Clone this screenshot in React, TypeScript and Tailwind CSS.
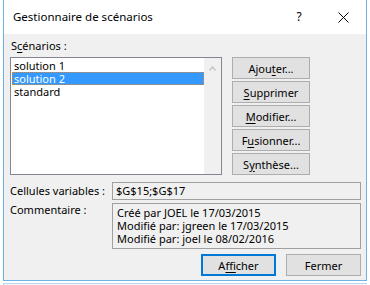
import React from 'react';

const font = { fontFamily: '"Segoe UI", "Noto Sans", sans-serif' };

function Key({ children }: { children: React.ReactNode }) {
  return <span className="underline underline-offset-2 decoration-1">{children}</span>;
}

function SideButton({ children }: { children: React.ReactNode }) {
  return (
    <button className="h-[22px] w-[78px] border border-[#adadad] bg-[#e1e1e1] text-[11px] leading-none text-black">
      {children}
    </button>
  );
}

export default function App() {
  const items = ['solution 1', 'solution 2', 'standard'];
  const selected = 1;

  return (
    <div className="w-[370px] h-[285px] bg-white text-[11px] text-black overflow-hidden" style={font}>
      <div className="ml-[3px] w-[364px] border-x border-b border-[#6cb4e8]">
        {/* title bar */}
        <div className="h-[34px] bg-white flex items-center pl-[9px]">
          <span className="flex-1 text-[11.5px]">Gestionnaire de scénarios</span>
          <span className="w-[10px] text-center text-[12px] mr-[34px]">?</span>
          <svg className="mr-[17px]" width="11" height="11" viewBox="0 0 11 11">
            <path d="M0.5 0.5 L10.5 10.5 M10.5 0.5 L0.5 10.5" stroke="#000" strokeWidth="1" />
          </svg>
        </div>

        {/* body */}
        <div className="h-[246px] bg-[#f0f0f0] flex flex-col">
          <div className="pl-[7px] pt-[4px] h-[23px] leading-[16px]">
            S<Key>c</Key>énarios :
          </div>

          <div className="flex pl-[6px]">
            <div className="w-[212px] h-[118px] border border-[#828790] bg-white flex">
              <div className="flex-1 pt-[1px] pl-[1px]">
                {items.map((it, i) => (
                  <div
                    key={it}
                    className={`h-[13px] leading-[13px] pl-[2px] ${
                      i === selected
                        ? 'bg-[#3399ff] text-white outline-1 outline-dotted outline-[#e08a2c] -outline-offset-1'
                        : ''
                    }`}
                  >
                    {it}
                  </div>
                ))}
              </div>
              <div className="w-[17px] bg-[#f0f0f0] flex justify-center pt-[8px]">
                <svg width="7" height="5" viewBox="0 0 7 5">
                  <path d="M0.5 4.5 L3.5 1 L6.5 4.5" stroke="#c2c2c2" strokeWidth="1.4" fill="none" />
                </svg>
              </div>
            </div>

            <div className="ml-[10px] flex flex-col gap-[2px]">
              <SideButton>
                Ajou<Key>t</Key>er...
              </SideButton>
              <SideButton>
                <Key>S</Key>upprimer
              </SideButton>
              <SideButton>
                <Key>M</Key>odifier...
              </SideButton>
              <SideButton>
                F<Key>u</Key>sionner...
              </SideButton>
              <SideButton>
                S<Key>y</Key>nthèse...
              </SideButton>
            </div>
          </div>

          <div className="flex mt-[7px] pl-[6px]">
            <div className="w-[102px] h-[18px] leading-[18px]">Cellules variables :</div>
            <div className="w-[249px] h-[18px] border border-[#a0a0a0] bg-[#f0f0f0] pl-[3px] leading-[16px]">
              $G$15;$G$17
            </div>
          </div>

          <div className="flex mt-[3px] pl-[6px]">
            <div className="w-[102px] leading-[14px]">Commentaire :</div>
            <div className="w-[249px] h-[46px] border border-[#a0a0a0] bg-[#f0f0f0] pl-[4px] pt-[2px] leading-[13px]">
              <div>Créé par JOEL le 17/03/2015</div>
              <div>Modifié par: jgreen le 17/03/2015</div>
              <div>Modifié par: joel le 08/02/2016</div>
            </div>
          </div>

          <div className="flex justify-end gap-[10px] mt-[5px] pr-[5px]">
            <button className="h-[22px] w-[75px] border-2 border-[#0078d7] bg-[#e1e1e1] text-[11px] leading-none">
              A<Key>f</Key>ficher
            </button>
            <button className="h-[22px] w-[75px] border border-[#adadad] bg-[#e1e1e1] text-[11px] leading-none">
              Fermer
            </button>
          </div>
        </div>
      </div>
      <div className="ml-[3px] mt-[2px] w-[364px] h-[4px] border-t border-l border-[#b9d7ee] bg-[#f7f7f7]" />
    </div>
  );
}
